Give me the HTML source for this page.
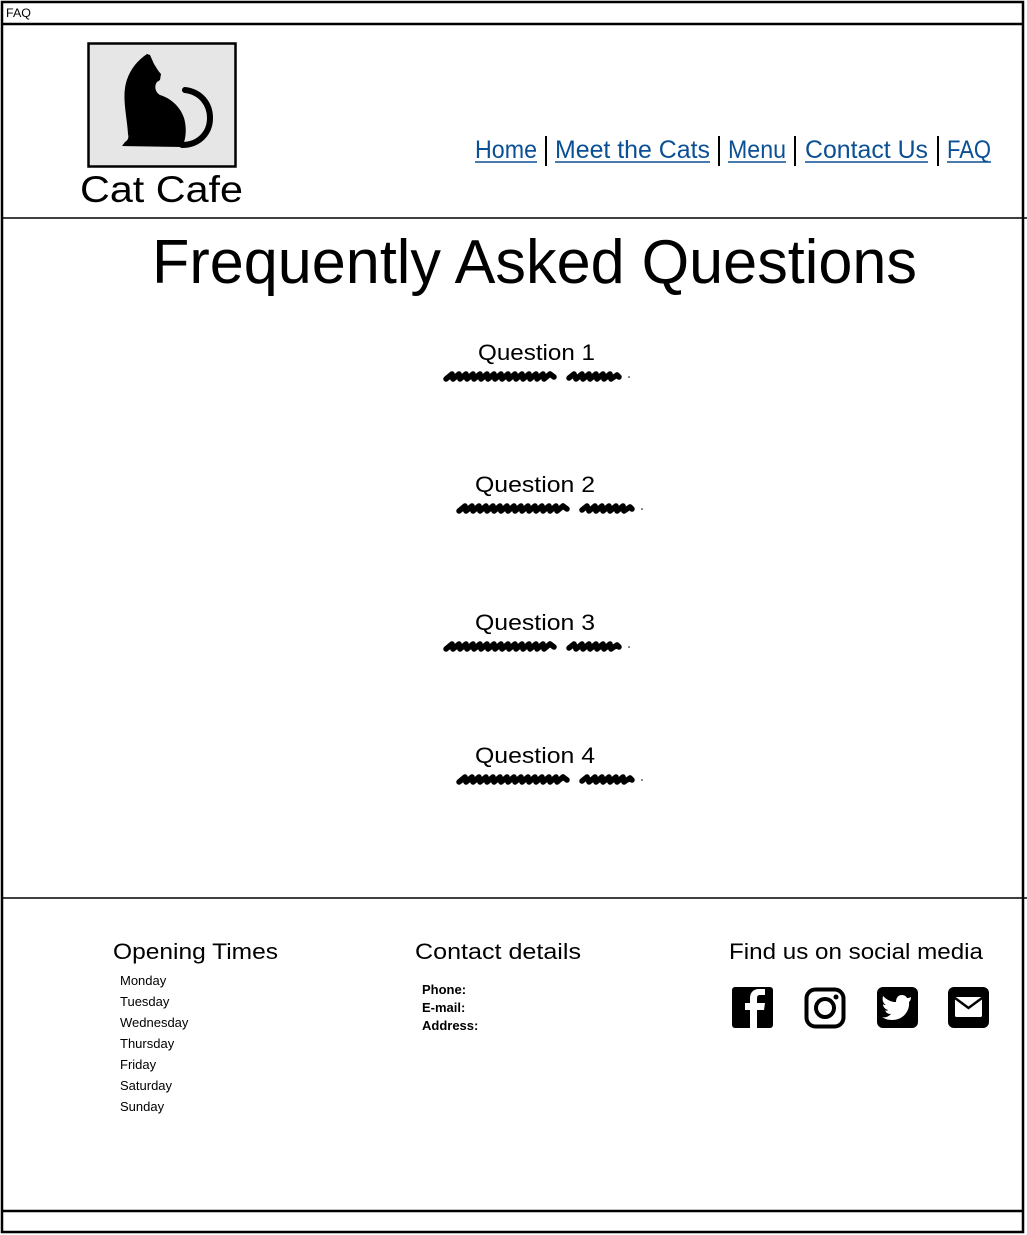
<!DOCTYPE html>
<html><head><meta charset="utf-8"><style>
html,body{margin:0;padding:0;background:#fff;}
body{width:1027px;height:1235px;position:relative;overflow:hidden;font-family:"Liberation Sans",sans-serif;}
svg{position:absolute;left:0;top:0;}
</style></head><body>
<svg width="1027" height="1235" viewBox="0 0 1027 1235" font-family="Liberation Sans, sans-serif">
<rect x="2" y="2" width="1021" height="1230" fill="none" stroke="#000" stroke-width="2.5"/>
<line x1="2" y1="24" x2="1023" y2="24" stroke="#000" stroke-width="2.5"/>
<text x="6" y="17" font-size="12" textLength="25" lengthAdjust="spacingAndGlyphs">FAQ</text>
<line x1="2" y1="218" x2="1027" y2="218" stroke="#000" stroke-width="1.5"/>
<line x1="2" y1="898" x2="1027" y2="898" stroke="#000" stroke-width="1.5"/>
<line x1="2" y1="1211" x2="1023" y2="1211" stroke="#000" stroke-width="2.5"/>
<!-- logo -->
<rect x="88.5" y="43.5" width="147" height="123" fill="#e6e6e6" stroke="#000" stroke-width="2.5"/>
<path d="M147 54 C135 62 127 74 125 88 C123 102 127 118 128 134 C129 138 128 140 125 142 L122 146 L182 147 C186 140 187 128 184 118 C180 106 170 98 160 95 C155 92 154 86 157 82 L160 80 L161 74 C158 71 156 67 154 64 L150 55 Z" fill="#000"/>
<path d="M185 90 C201 92 210 104 210 118 C210 133 199 145 182 145" fill="none" stroke="#000" stroke-width="6" stroke-linecap="round"/>
<text x="80" y="202" font-size="37" textLength="163" lengthAdjust="spacingAndGlyphs">Cat Cafe</text>
<!-- nav -->
<g fill="#0b4f94" font-size="25">
<text x="475" y="158" textLength="62" lengthAdjust="spacingAndGlyphs">Home</text>
<text x="555" y="158" textLength="155" lengthAdjust="spacingAndGlyphs">Meet the Cats</text>
<text x="728" y="158" textLength="58" lengthAdjust="spacingAndGlyphs">Menu</text>
<text x="805" y="158" textLength="123" lengthAdjust="spacingAndGlyphs">Contact Us</text>
<text x="947" y="158" textLength="44" lengthAdjust="spacingAndGlyphs">FAQ</text>
</g>
<g stroke="#0b4f94" stroke-width="1.5">
<line x1="475" y1="162" x2="537" y2="162"/><line x1="555" y1="162" x2="710" y2="162"/>
<line x1="728" y1="162" x2="786" y2="162"/><line x1="805" y1="162" x2="928" y2="162"/>
<line x1="947" y1="162" x2="991" y2="162"/>
</g>
<g stroke="#000" stroke-width="2">
<line x1="546" y1="136" x2="546" y2="166"/><line x1="719" y1="136" x2="719" y2="166"/>
<line x1="795" y1="136" x2="795" y2="166"/><line x1="938" y1="136" x2="938" y2="166"/>
</g>
<!-- title -->
<text x="152" y="283" font-size="62" textLength="765" lengthAdjust="spacingAndGlyphs">Frequently Asked Questions</text>
<!-- questions -->
<g font-size="22">
<text x="478" y="360" textLength="117" lengthAdjust="spacingAndGlyphs">Question 1</text>
<text x="475" y="492" textLength="120" lengthAdjust="spacingAndGlyphs">Question 2</text>
<text x="475" y="630" textLength="120" lengthAdjust="spacingAndGlyphs">Question 3</text>
<text x="475" y="763" textLength="120" lengthAdjust="spacingAndGlyphs">Question 4</text>
</g>
<defs>
<g id="sc">
<path d="M3 7 L9 2 L10 7 L16 2 L17 7 L23 2 L24 7 L30 2 L31 7 L37 2 L38 7 L44 2 L45 7 L51 2 L52 7 L58 2 L59 7 L65 2 L66 7 L72 2 L73 7 L79 2 L80 7 L86 2 L87 7 L93 2 L94 7 L100 2 L101 7 L107 2 L111 5" fill="none" stroke="#000" stroke-width="5.5" stroke-linecap="round" stroke-linejoin="round"/>
<path d="M126 6 L131 2 L133 7 L139 2 L140 7 L146 2 L147 7 L153 2 L154 7 L160 2 L161 7 L167 2 L168 7 L174 3 L176 5" fill="none" stroke="#000" stroke-width="5.5" stroke-linecap="round" stroke-linejoin="round"/>
<circle cx="186" cy="5" r="0.8" fill="#000"/>
</g>
</defs>
<use href="#sc" x="443" y="372"/>
<use href="#sc" x="456" y="504"/>
<use href="#sc" x="443" y="642"/>
<use href="#sc" x="456" y="775"/>
<!-- footer -->
<g font-size="22">
<text x="113" y="959" textLength="165" lengthAdjust="spacingAndGlyphs">Opening Times</text>
<text x="415" y="959" textLength="166" lengthAdjust="spacingAndGlyphs">Contact details</text>
<text x="729" y="959" textLength="254" lengthAdjust="spacingAndGlyphs">Find us on social media</text>
</g>
<g font-size="13">
<text x="120" y="985">Monday</text><text x="120" y="1006">Tuesday</text>
<text x="120" y="1027">Wednesday</text><text x="120" y="1048">Thursday</text>
<text x="120" y="1069">Friday</text><text x="120" y="1090">Saturday</text>
<text x="120" y="1111">Sunday</text>
<text x="422" y="994" font-weight="bold" font-size="13">Phone:</text>
<text x="422" y="1012" font-weight="bold" font-size="13">E-mail:</text>
<text x="422" y="1030" font-weight="bold" font-size="13">Address:</text>
</g>
<!-- icons -->
<rect x="732" y="987" width="41" height="41" rx="3" fill="#000"/>
<path d="M757 1028 V1010 H764 L765 1003 H757 V998 C757 996 758 995 760 995 H765 V989 H759 C753 989 750 993 750 998 V1003 H745 V1010 H750 V1028 Z" fill="#fff"/>
<rect x="806.5" y="989.5" width="37" height="37" rx="9" fill="none" stroke="#000" stroke-width="4"/>
<circle cx="825" cy="1008" r="9" fill="none" stroke="#000" stroke-width="4"/>
<circle cx="836" cy="997" r="2.5" fill="#000"/>
<rect x="877" y="987" width="41" height="41" rx="6" fill="#000"/>
<path d="M911 997 C909 998 908 998 907 998 C906 996 904 995 902 995 C898 995 896 998 896 1002 C890 1002 886 999 883 996 C882 1000 883 1003 886 1005 C885 1005 884 1005 883 1004 C883 1007 885 1009 888 1010 C887 1011 886 1011 885 1010 C886 1013 888 1014 891 1014 C888 1017 885 1018 882 1017 C885 1019 888 1020 892 1020 C904 1020 910 1010 909 1002 C910 1001 911 1000 911 997 Z" fill="#fff"/>
<rect x="948" y="987" width="41" height="41" rx="6" fill="#000"/>
<rect x="955" y="997" width="27" height="20" rx="1.5" fill="#fff"/>
<path d="M955 998 L968.5 1008 L982 998" fill="none" stroke="#000" stroke-width="2.5"/>
</svg>
</body></html>
